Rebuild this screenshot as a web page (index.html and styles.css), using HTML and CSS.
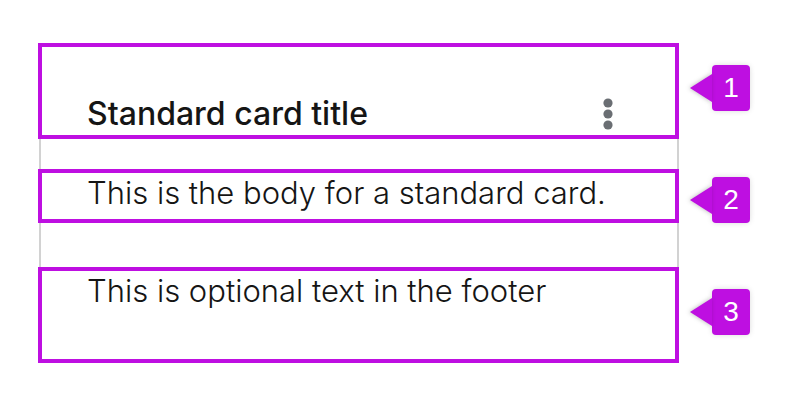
FILE: index.html
```html
<!DOCTYPE html>
<html lang="en">
<head>
<meta charset="utf-8">
<meta name="viewport" content="width=device-width, initial-scale=1">
<title>Card anatomy</title>
<link rel="stylesheet" href="styles.css">
</head>
<body>
<main class="anatomy">
  <article class="card">
    <header class="region card-header">
      <h2 class="card-title">Standard card title</h2>
      <button class="kebab" type="button" aria-label="Card actions">
        <svg width="10" height="32" viewBox="0 0 10 32" fill="currentColor" aria-hidden="true">
          <circle cx="5" cy="5" r="4.6"/>
          <circle cx="5" cy="16" r="4.6"/>
          <circle cx="5" cy="27" r="4.6"/>
        </svg>
      </button>
    </header>
    <p class="region card-body">This is the body for a standard card.</p>
    <footer class="region card-footer">This is optional text in the footer</footer>
  </article>
  <ol class="callouts">
    <li class="callout">1</li>
    <li class="callout">2</li>
    <li class="callout">3</li>
  </ol>
</main>
</body>
</html>
```
FILE: styles.css
```css
* {
  box-sizing: border-box;
}

body {
  margin: 0;
  background: #fff;
  color: #151515;
  font-family: Inter, "Liberation Sans", sans-serif;
}

.anatomy {
  display: flex;
  align-items: flex-start;
  gap: 33px;
  padding: 43px 38px;
}

.card {
  flex: 1;
  background:
    linear-gradient(#d2d2d2, #d2d2d2) 1px 0 / 2px 100% no-repeat,
    linear-gradient(#d2d2d2, #d2d2d2) right / 2px 100% no-repeat;
}

.region {
  margin: 0;
  padding: 0 45px;
  border: 4px solid #be0fe1;
  background: #fff;
  font-size: 31px;
  font-weight: 300;
  line-height: 40px;
}

.card-header {
  display: flex;
  align-items: center;
  justify-content: space-between;
  padding: 47px 62px 1px 45px;
}

.card-title {
  margin: 0;
  font-size: 32px;
  font-weight: 500;
  line-height: 40px;
}

.kebab {
  display: flex;
  padding: 0;
  border: 0;
  background: none;
  color: #6a6e73;
}

.card-body {
  margin-top: 30px;
  padding-bottom: 6px;
}

.card-footer {
  margin-top: 44px;
  padding-bottom: 48px;
}

.callouts {
  display: flex;
  flex-direction: column;
  gap: 66px;
  margin: 0;
  padding: 22px 0 0;
  list-style: none;
}

.callout {
  position: relative;
  width: 38px;
  border-radius: 4px;
  background: #be0fe1;
  box-shadow: 0 0 6px -1px rgb(0 0 0 / 20%);
  color: #fff;
  font-family: "Liberation Sans", sans-serif;
  font-size: 28px;
  line-height: 46px;
  text-align: center;
}

.callout::before {
  content: "";
  position: absolute;
  top: 9px;
  right: 100%;
  border: solid transparent;
  border-width: 14px 22px 14px 0;
  border-right-color: #be0fe1;
  filter: drop-shadow(-1px 0 2px rgb(0 0 0 / 25%));
}
```
